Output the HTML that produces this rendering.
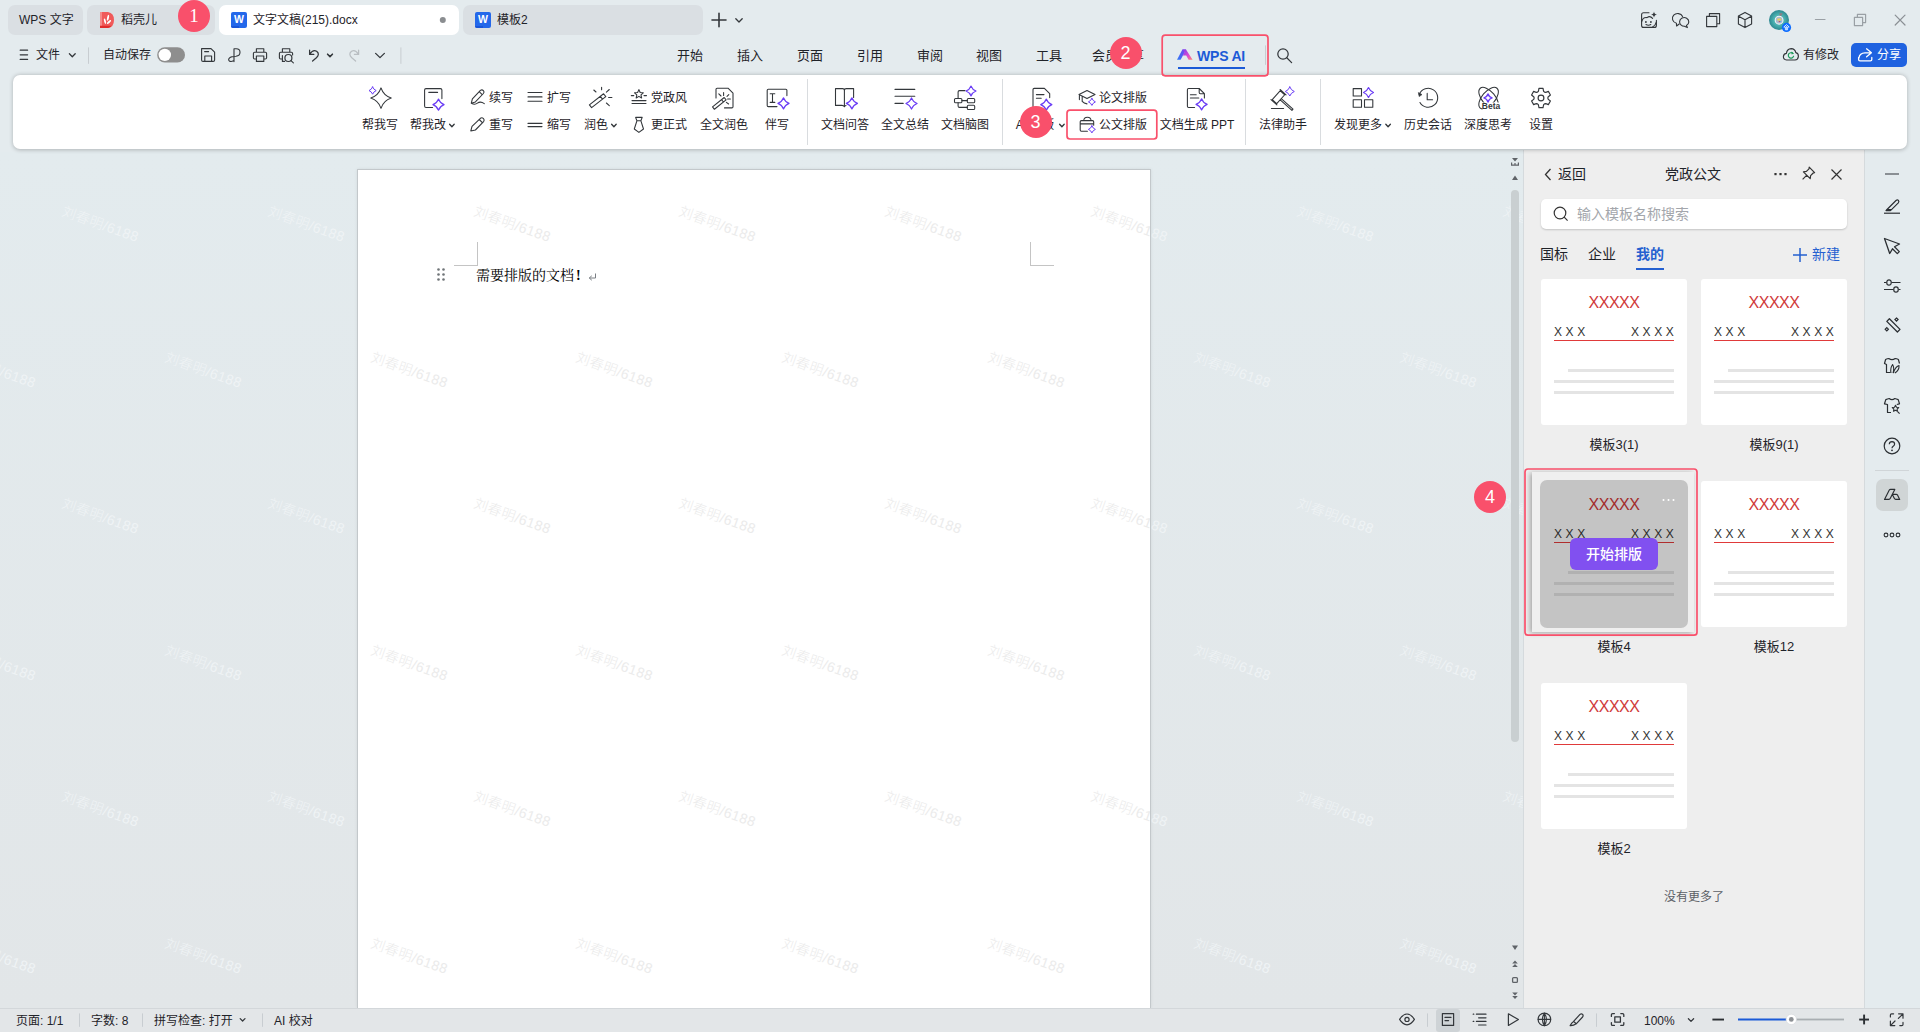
<!DOCTYPE html>
<html lang="zh-CN">
<head>
<meta charset="utf-8">
<title>WPS</title>
<style>
*{box-sizing:border-box;margin:0;padding:0}
html,body{width:1920px;height:1032px;overflow:hidden}
body{background:#e4ebee;font-family:"Liberation Sans","Noto Sans CJK SC",sans-serif;font-size:12px;color:#1f2329;position:relative}
.abs{position:absolute}
svg{position:absolute;overflow:visible}
.t{position:absolute;white-space:nowrap;line-height:1}
/* title tabs */
.tab{position:absolute;top:5px;height:30px;border-radius:7px;background:#dadfe3}
.tab.act{background:#fff}
.tab .t{top:9px;font-size:12px}
.badge{position:absolute;width:32px;height:32px;border-radius:50%;background:#f9506b;color:#fff;font-family:"Liberation Serif","Noto Serif CJK SC",serif;font-size:20px;line-height:32px;text-align:center;z-index:20}
.redbox{position:absolute;border:2px solid #f9506b;border-radius:3px;z-index:15}
/* menu */
.menu .t{top:49px;font-size:13px;color:#1f2329}
/* ribbon */
#ribbon{position:absolute;left:13px;top:75px;width:1894px;height:74px;background:#fff;border-radius:7px;box-shadow:0 0.5px 4px rgba(0,0,0,.24);z-index:4}
.rl{position:absolute;white-space:nowrap;line-height:1;font-size:12px;top:119px;color:#1f2329;transform:translateX(-50%)}
.rs{position:absolute;white-space:nowrap;line-height:1;font-size:12px;color:#1f2329}
.vsep{position:absolute;width:1px;background:#d9dcdf}
/* doc */
#page{position:absolute;left:357px;top:169px;width:794px;height:839px;background:#fff;border:1px solid #c3c8cb;border-bottom:none;box-shadow:0 0 3px rgba(0,0,0,.08)}
.wm{position:absolute;white-space:nowrap;font-size:14px;transform:rotate(19.5deg);transform-origin:left top;line-height:1;letter-spacing:0.4px;font-weight:300}
.wm.g{color:#eef2f4}
/* panel */
#panel{position:absolute;left:1523px;top:150px;width:342px;height:858px;background:#eeeeee;border-left:1px solid #d5dadd;border-right:1px solid #d5dadd}
.card{position:absolute;width:146px;height:146px;background:#fff;border-radius:3px}
.card .xx{position:absolute;left:0;width:146px;text-align:center;top:16px;font-size:16px;color:#d03a3a;line-height:1;letter-spacing:-0.5px}
.card .xl{position:absolute;left:13px;top:47px;font-size:12px;letter-spacing:3.6px;color:#333;line-height:1}
.card .xr{position:absolute;left:90px;top:47px;font-size:12px;letter-spacing:3.6px;color:#333;line-height:1}
.card .rline{position:absolute;left:13px;top:61px;width:120px;height:1px;background:#e03a3a}
.card .g1,.card .g2,.card .g3{position:absolute;height:3px;background:#e4e4e4}
.card .g1{left:27px;width:106px;top:90px}
.card .g2{left:13px;width:120px;top:101px}
.card .g3{left:13px;width:120px;top:112px}
.clab{position:absolute;width:146px;text-align:center;font-size:13px;color:#1f2329;line-height:1}
/* status */
#status{position:absolute;left:0;top:1008px;width:1920px;height:24px;background:#e3e6e8;border-top:1px solid #d3d7da}
#status .t{top:6px;font-size:12px;color:#1f2329}
</style>
</head>
<body>

<!-- ===== title tabs ===== -->
<div class="tab" style="left:8px;width:75px"><span class="t" style="left:11px">WPS 文字</span></div>
<div class="tab" style="left:87px;width:128px"><span class="t" style="left:34px">稻壳儿</span></div>
<div class="tab act" style="left:219px;width:240px"><span class="t" style="left:34px">文字文稿(215).docx</span></div>
<div class="tab" style="left:463px;width:240px"><span class="t" style="left:34px">模板2</span></div>
<div class="badge" style="left:178px;top:0px;font-size:19px">1</div>

<!-- ===== menu row ===== -->
<div class="menu">
<span class="t" style="left:36px;top:49px;font-size:12px">文件</span>
<span class="t" style="left:103px;top:49px;font-size:12px">自动保存</span>
<span class="t" style="left:677px">开始</span>
<span class="t" style="left:737px">插入</span>
<span class="t" style="left:797px">页面</span>
<span class="t" style="left:857px">引用</span>
<span class="t" style="left:917px">审阅</span>
<span class="t" style="left:976px">视图</span>
<span class="t" style="left:1036px">工具</span>
<span class="t" style="left:1092px">会员专享</span>
<span class="t" style="left:1197px;top:49px;font-size:14px;letter-spacing:-0.2px;color:#1b5ad7;font-weight:bold">WPS AI</span>
<span class="t" style="left:1803px;top:49px;font-size:12px">有修改</span>
</div>
<div class="abs" style="left:1178px;top:67px;width:67px;height:2px;background:#1b5ad7"></div>
<svg style="left:0;top:0;z-index:15;pointer-events:none" width="1920" height="1032"><rect x="1162.2" y="35.2" width="105.8" height="40.6" rx="3" fill="none" stroke="#f9506b" stroke-width="1.7"/></svg>
<div class="badge" style="left:1109.5px;top:37px;font-family:'Liberation Sans',sans-serif;font-size:18px">2</div>
<div class="abs" style="left:1851px;top:43px;width:56px;height:24px;border-radius:5px;background:#1f62e0"></div>
<span class="t" style="left:1877px;top:49px;font-size:12px;color:#fff">分享</span>

<!--TOPICONS-->
<svg style="left:0;top:0;z-index:5" width="1920" height="76" viewBox="0 0 1920 76">
<path d="M100 12 H108 Q114 13 114 20 Q114 27 108 28 H100 Z" fill="#f05a5a"/>
<path d="M100 12 H102 V28 H100 Z" fill="#f48a8a"/>
<path d="M100 25.8 H111.6 Q110.2 27.6 108 28 H100 Z" fill="#e12c2c"/>
<ellipse cx="108" cy="17.8" rx="0.95" ry="3" transform="rotate(12 108 17.8)" fill="#fff"/><ellipse cx="105" cy="21.2" rx="0.9" ry="2.8" transform="rotate(-15 105 21.2)" fill="#fff"/><ellipse cx="109" cy="22" rx="0.9" ry="2.7" transform="rotate(48 109 22)" fill="#fff"/>
<rect x="231" y="12" width="16" height="16" rx="2" fill="#2468ea"/><path d="M231 26 H239 V28 H233 Q231 28 231 26 Z" fill="#1a56d8"/><text x="239" y="23.4" text-anchor="middle" font-family="Liberation Sans,sans-serif" font-weight="bold" font-size="10.5" fill="#fff">W</text>
<rect x="475" y="12" width="16" height="16" rx="2" fill="#2468ea"/><path d="M475 26 H483 V28 H477 Q475 28 475 26 Z" fill="#1a56d8"/><text x="483" y="23.4" text-anchor="middle" font-family="Liberation Sans,sans-serif" font-weight="bold" font-size="10.5" fill="#fff">W</text>
<circle cx="442.8" cy="20" r="3" fill="#8a8d90"/>
<path d="M712 20 H726 M719 13.2 V26.8" fill="none" stroke="#33373b" stroke-width="1.6" stroke-linejoin="round" stroke-linecap="round" stroke-linecap="butt"/>
<path d="M735.8 18.8 L739 22 L742.2 18.8" fill="none" stroke="#33373b" stroke-width="1.3" stroke-linejoin="round" stroke-linecap="round" />
<path d="M1649 12.8 H1643.6 Q1641.6 12.8 1641.6 14.8 V25.4 Q1641.6 27.4 1643.6 27.4 H1654.4 Q1656.4 27.4 1656.4 25.4 V20.4" fill="none" stroke="#33373b" stroke-width="1.12" stroke-linejoin="round" stroke-linecap="round" />
<path d="M1641.8 21.4 Q1643 17 1647 17.6 Q1650 15.4 1652.6 18.4 M1646 24.6 Q1648.4 25.8 1650.8 24.6 M1652.6 27 Q1655.6 25.4 1656.2 22.4" fill="none" stroke="#33373b" stroke-width="1.1" stroke-linejoin="round" stroke-linecap="round" />
<circle cx="1645.9" cy="22" r=".9" fill="#33373b"/><circle cx="1650.9" cy="22" r=".9" fill="#33373b"/>
<path d="M1654 11.4 Q1654.3 14.2 1657.2 14.6 Q1654.3 15 1654 17.8 Q1653.7 15 1650.8 14.6 Q1653.7 14.2 1654 11.4 Z" fill="#33373b"/>
<path d="M1682.6 16.6 A5.3 4.9 0 1 0 1676.4 23.2 L1676.6 26 L1679.2 24" fill="none" stroke="#33373b" stroke-width="1.12" stroke-linejoin="round" stroke-linecap="round" />
<path d="M1679.6 21.6 A4.6 4.3 0 1 1 1686.4 25.6 L1687.4 27.6 L1684.4 26.2 A4.8 4.3 0 0 1 1679.6 21.6 Z" fill="none" stroke="#33373b" stroke-width="1.12" stroke-linejoin="round" stroke-linecap="round" />
<path d="M1706.6 16.4 H1716.8 V26.6 H1706.6 Z M1709.4 16.2 V13.6 H1719.6 V23.8 H1717" fill="none" stroke="#33373b" stroke-width="1.12" stroke-linejoin="round" stroke-linecap="round" />
<path d="M1745 12.4 L1751.6 16 V24 L1745 27.6 L1738.4 24 V16 Z M1738.6 16.2 L1745 19.8 L1751.4 16.2 M1745 19.8 V27.4" fill="none" stroke="#33373b" stroke-width="1.12" stroke-linejoin="round" stroke-linecap="round" />
<defs><radialGradient id="avg" cx="0.5" cy="0.5" r="0.5"><stop offset="0" stop-color="#5cc2c0"/><stop offset=".55" stop-color="#4ab0b0"/><stop offset="1" stop-color="#2c8790"/></radialGradient></defs>
<circle cx="1779" cy="20" r="10" fill="url(#avg)"/>
<circle cx="1779.1" cy="20.2" r="3.9" fill="#a9b9cf" stroke="#f4f4f6" stroke-width="1.1"/><rect x="1777.2" y="18.6" width="3.8" height="1.8" rx=".5" fill="#e8cf5a"/><circle cx="1779.3" cy="21.6" r=".7" fill="#c2394a"/><circle cx="1780.7" cy="21.5" r=".6" fill="#4aa3e8"/><path d="M1779.2 13.6 Q1781 12.4 1782.6 13.4 L1781.4 15.8 H1779.8 Z" fill="#8a7f86"/>
<circle cx="1786.5" cy="27.4" r="4.6" fill="#0b6cff"/><path d="M1786.5 24.6 L1789.2 27 H1787.6 V29.8 H1785.4 V27 H1783.8 Z" fill="none" stroke="#fff" stroke-width=".8" stroke-linejoin="round"/><path d="M1786.5 26 V29.6" stroke="#fff" stroke-width=".7"/>
<path d="M1815.4 19.5 H1825" fill="none" stroke="#9aa0a5" stroke-width="1.2" stroke-linejoin="round" stroke-linecap="round" />
<path d="M1854.4 17.4 H1862.6 V25.6 H1854.4 Z M1857.4 17.2 V14.4 H1865.6 V22.6 H1862.8" fill="none" stroke="#9aa0a5" stroke-width="1.2" stroke-linejoin="round" stroke-linecap="round" />
<path d="M1895.2 15.2 L1905 25 M1905 15.2 L1895.2 25" fill="none" stroke="#8a8f94" stroke-width="1.2" stroke-linejoin="round" stroke-linecap="round" />
<path d="M20.2 50.2 H27.6 M20.2 54.8 H27.6 M20.2 59.4 H27.6" fill="none" stroke="#33373b" stroke-width="1.2" stroke-linejoin="round" stroke-linecap="round" stroke-linecap="butt"/>
<path d="M69.4 53.8 L72.3 56.7 L75.2 53.8" fill="none" stroke="#33373b" stroke-width="1.3" stroke-linejoin="round" stroke-linecap="round" />
<rect x="88" y="47.4" width="1" height="16.4" fill="#c8cdd1"/>
<rect x="400.4" y="47.4" width="1" height="16.4" fill="#c8cdd1"/>
<rect x="157.2" y="47.3" width="27.8" height="15.2" rx="7.6" fill="#8e8e8e"/><circle cx="164.8" cy="54.9" r="6.2" fill="#fff"/>
<path d="M201.6 48.6 H211 L214.6 52.2 V60 Q214.6 61.4 213.2 61.4 H203 Q201.6 61.4 201.6 60 Z M204.8 61.2 V56 H211.6 V61.2 M204.6 51.6 H208.6" fill="none" stroke="#33373b" stroke-width="1.12" stroke-linejoin="round" stroke-linecap="round" />
<path d="M234 61.6 V48.8 H236.2 Q240 48.8 240 52.2 Q240 55.8 236 56.2 Q231 56.4 229.6 57.8 Q227.8 59.6 229.4 61 Q231 62.2 233.8 60.6" fill="none" stroke="#33373b" stroke-width="1.12" stroke-linejoin="round" stroke-linecap="round" />
<path d="M256.4 52 V48.8 H263.8 V52 M256.2 59 H254.6 Q253.4 59 253.4 57.8 V53.4 Q253.4 52.2 254.6 52.2 H265.4 Q266.6 52.2 266.6 53.4 V57.8 Q266.6 59 265.4 59 H264 M256.4 56 H263.8 V61.4 H256.4 Z" fill="none" stroke="#33373b" stroke-width="1.12" stroke-linejoin="round" stroke-linecap="round" />
<path d="M282.4 52 V48.8 H289.8 V52 M282.2 59 H280.6 Q279.4 59 279.4 57.8 V53.4 Q279.4 52.2 280.6 52.2 H291.4 Q292.6 52.2 292.6 53.4 V55 M282.4 55.6 V61.4 H284.6" fill="none" stroke="#33373b" stroke-width="1.12" stroke-linejoin="round" stroke-linecap="round" />
<circle cx="288.4" cy="58" r="3.5" fill="none" stroke="#33373b" stroke-width="1.2"/><path d="M291 60.6 L293.4 62.8" fill="none" stroke="#33373b" stroke-width="1.12" stroke-linejoin="round" stroke-linecap="round" />
<path d="M309.6 50.2 V54.4 H313.8 M309.8 54.2 Q313 49 316.6 51.2 Q320.2 53.8 316.4 57.8 L312.6 61" fill="none" stroke="#33373b" stroke-width="1.25" stroke-linejoin="round" stroke-linecap="round" />
<path d="M327.6 54.2 L330 56.6 L332.4 54.2" fill="none" stroke="#33373b" stroke-width="1.6" stroke-linejoin="round" stroke-linecap="round" />
<path d="M358.6 50.2 V54.4 H354.4 M358.4 54.2 Q355.2 49 351.6 51.2 Q348 53.8 351.8 57.8 L355.6 61" fill="none" stroke="#b9bec2" stroke-width="1.25" stroke-linejoin="round" stroke-linecap="round" />
<path d="M375.6 53.4 L380 57.6 L384.4 53.4" fill="none" stroke="#33373b" stroke-width="1.3" stroke-linejoin="round" stroke-linecap="round" />
<defs><linearGradient id="lg1" x1="0" y1="1" x2="1" y2="0"><stop offset="0" stop-color="#2d7cf6"/><stop offset="1" stop-color="#7a3df0"/></linearGradient><linearGradient id="lg2" x1="0" y1="0" x2="1" y2="1"><stop offset="0" stop-color="#7a3df0"/><stop offset=".6" stop-color="#e04bd0"/><stop offset="1" stop-color="#ff8a6a"/></linearGradient></defs>
<path d="M1177 59.8 L1182.4 49.4 H1186.2 L1180.6 59.8 Z" fill="url(#lg1)"/>
<path d="M1182.4 49.4 H1186 L1192.6 59.8 H1188.6 L1186.2 55.6 H1182.6 L1184.4 52.6 Z" fill="url(#lg2)"/>
<rect x="1265" y="45.4" width="1" height="19.4" fill="#c8cdd1"/>
<circle cx="1283" cy="54" r="5.2" fill="none" stroke="#33373b" stroke-width="1.25"/><path d="M1286.8 57.8 L1291.6 62.6" fill="none" stroke="#33373b" stroke-width="1.25" stroke-linejoin="round" stroke-linecap="round" />
<path d="M1786.6 60 Q1783.2 59.6 1783.4 56.4 Q1783.8 53.6 1786.4 53.4 Q1787 48.8 1791.2 48.6 Q1795 48.8 1795.8 52.6 Q1798.6 53.2 1798.4 56.6 Q1798 59.8 1795 60 Z" fill="none" stroke="#33373b" stroke-width="1.15" stroke-linejoin="round" stroke-linecap="round" />
<path d="M1792.8 53.4 A2.7 2.7 0 1 0 1793.6 56.2" fill="none" stroke="#1e9b5a" stroke-width="1.2" stroke-linejoin="round" stroke-linecap="round" /><path d="M1791.6 51.6 L1794 53.4 L1791.6 54.6 Z" fill="#1e9b5a"/>
<path d="M1866.6 48.8 L1871.4 52.8 L1866.6 56.8 M1871 52.8 H1865 Q1859.6 53 1859 57.6 M1858.6 57.4 V59.4 Q1858.6 60.8 1860 60.8 H1870.4 Q1871.8 60.8 1871.8 59.4 V57.4" fill="none" stroke="#fff" stroke-width="1.3" stroke-linejoin="round" stroke-linecap="round" />
</svg>
<!--/TOPICONS-->
<!-- ===== ribbon ===== -->
<div id="ribbon"></div>
<div id="rib" style="position:absolute;left:0;top:0;z-index:5">
<span class="rl" style="left:380px">帮我写</span>
<span class="rl" style="left:428px">帮我改</span>
<span class="rs" style="left:489px;top:92px">续写</span>
<span class="rs" style="left:489px;top:119px">重写</span>
<span class="rs" style="left:547px;top:92px">扩写</span>
<span class="rs" style="left:547px;top:119px">缩写</span>
<span class="rl" style="left:596px">润色</span>
<span class="rs" style="left:651px;top:92px">党政风</span>
<span class="rs" style="left:651px;top:119px">更正式</span>
<span class="rl" style="left:724px">全文润色</span>
<span class="rl" style="left:777px">伴写</span>
<span class="rl" style="left:845px">文档问答</span>
<span class="rl" style="left:905px">全文总结</span>
<span class="rl" style="left:965px">文档脑图</span>
<span class="rl" style="left:1035px">AI 排版</span>
<span class="rs" style="left:1099px;top:92px">论文排版</span>
<span class="rs" style="left:1099px;top:119px">公文排版</span>
<span class="rl" style="left:1197px">文档生成 PPT</span>
<span class="rl" style="left:1283px">法律助手</span>
<span class="rl" style="left:1358px">发现更多</span>
<span class="rl" style="left:1428px">历史会话</span>
<span class="rl" style="left:1488px">深度思考</span>
<span class="rl" style="left:1541px">设置</span>
<div class="vsep" style="left:807px;top:79px;height:66px"></div>
<div class="vsep" style="left:1002px;top:79px;height:66px"></div>
<div class="vsep" style="left:1245px;top:79px;height:66px"></div>
<div class="vsep" style="left:1320px;top:79px;height:66px"></div>
</div>
<!--RIBICONS-->
<svg style="left:0;top:0;z-index:5" width="1920" height="160" viewBox="0 0 1920 160">
<path d="M381.00 87.90 Q383.55 95.55 391.20 98.10 Q383.55 100.65 381.00 108.30 Q378.45 100.65 370.80 98.10 Q378.45 95.55 381.00 87.90 Z" fill="none" stroke="#33373b" stroke-width="1.08" stroke-linejoin="round" stroke-linecap="round" />
<path d="M372.60 87.00 Q373.57 89.63 376.20 90.60 Q373.57 91.57 372.60 94.20 Q371.63 91.57 369.00 90.60 Q371.63 89.63 372.60 87.00 Z" fill="none" stroke="#6a3df5" stroke-width="1" stroke-linejoin="round" stroke-linecap="round" />
<path d="M441.9 98.6 V90 Q441.9 88.6 440.4 88.6 H426 Q424.6 88.6 424.6 90 V106.1 Q424.6 107.5 426 107.5 H432.6 M428.8 92.4 H437.6" fill="none" stroke="#33373b" stroke-width="1.08" stroke-linejoin="round" stroke-linecap="round" />
<path d="M438.50 99.00 Q440.01 103.09 444.10 104.60 Q440.01 106.11 438.50 110.20 Q436.99 106.11 432.90 104.60 Q436.99 103.09 438.50 99.00 Z" fill="none" stroke="#6a3df5" stroke-width="1.12" stroke-linejoin="round" stroke-linecap="round" />
<path d="M471.3 103.2 L472.4 98.8 L480.4 90.4 Q482 89.2 483.4 90.6 Q484.7 92 483.4 93.5 L475.4 101.9 Z M479.2 91.7 L482.2 94.7 M471.3 103.3 Q475 105.2 477.4 103.2 Q480.4 100.8 484.3 103.6" fill="none" stroke="#33373b" stroke-width="1.08" stroke-linejoin="round" stroke-linecap="round" />
<path d="M470.8 131 L472 126.4 L480.4 118.3 Q482 117.2 483.5 118.6 Q484.8 120 483.6 121.6 L475.4 130 Z M479.2 119.5 L482.4 122.7" fill="none" stroke="#33373b" stroke-width="1.08" stroke-linejoin="round" stroke-linecap="round" />
<path d="M528 92.5 H542 M528 96.9 H542 M528 101.3 H542" fill="none" stroke="#33373b" stroke-width="1.08" stroke-linejoin="round" stroke-linecap="round" />
<path d="M528 123.4 H542 M528 126.6 H542" fill="none" stroke="#33373b" stroke-width="1.08" stroke-linejoin="round" stroke-linecap="round" />
<g transform="rotate(-38 597.6 100.7)"><path d="M588.6 98.9 H606.6 V102.5 H588.6 Z M602.4 98.9 V102.5" fill="none" stroke="#33373b" stroke-width="1.08" stroke-linejoin="round" stroke-linecap="round" /></g>
<path d="M601.6 87.2 V89.8 M593.8 90 L596 92 M606.4 92.2 L609.3 89.5 M608.6 97.5 H611.9 M606.4 103 L609.3 105.6" fill="none" stroke="#33373b" stroke-width="1.08" stroke-linejoin="round" stroke-linecap="round" />
<path d="M638.90 89.60 L640.19 92.42 L643.27 92.78 L640.99 94.88 L641.60 97.92 L638.90 96.40 L636.20 97.92 L636.81 94.88 L634.53 92.78 L637.61 92.42 Z" fill="none" stroke="#33373b" stroke-width="1.08" stroke-linejoin="round" stroke-linecap="round" />
<path d="M631.3 95.6 H633.8 M644 95.6 H646.5 M632 100.6 H646 M632 103.5 H646" fill="none" stroke="#33373b" stroke-width="1.08" stroke-linejoin="round" stroke-linecap="round" />
<path d="M635.6 117.4 H642.2 L640.9 120.8 H636.9 Z M636.9 120.8 L634.3 129 L638.9 132.4 L643.5 129 L640.9 120.8" fill="none" stroke="#33373b" stroke-width="1.08" stroke-linejoin="round" stroke-linecap="round" />
<path d="M716 98 V89.3 Q716 88.2 717.1 88.2 H728 L733 93.2 V106.8 Q733 107.9 731.9 107.9 H724.5" fill="none" stroke="#33373b" stroke-width="1.08" stroke-linejoin="round" stroke-linecap="round" />
<g transform="rotate(-39 719.3 103.4)"><path d="M711.8 101.9 H726.8 V104.9 H711.8 Z M723.4 101.9 V104.9" fill="none" stroke="#33373b" stroke-width="1.08" stroke-linejoin="round" stroke-linecap="round" /></g>
<path d="M723.6 92.6 V95.4 M718.8 93.8 L721 96 M727 96.4 L728.8 94.6 M727.6 99 H730.4 M726.4 102.4 L728.6 104" fill="none" stroke="#33373b" stroke-width="1.08" stroke-linejoin="round" stroke-linecap="round" />
<path d="M786.9 95.6 V90.3 Q786.9 89.2 785.8 89.2 H768.3 Q767.2 89.2 767.2 90.3 V105.5 Q767.2 106.6 768.3 106.6 H777 M770.2 93.8 H774.8 M770.2 102.4 H774.8 M772.5 93.8 V102.4" fill="none" stroke="#33373b" stroke-width="1.08" stroke-linejoin="round" stroke-linecap="round" />
<path d="M783.50 97.80 Q785.01 101.89 789.10 103.40 Q785.01 104.91 783.50 109.00 Q781.99 104.91 777.90 103.40 Q781.99 101.89 783.50 97.80 Z" fill="none" stroke="#6a3df5" stroke-width="1.12" stroke-linejoin="round" stroke-linecap="round" />
<path d="M835.5 88.6 H842.6 Q844.4 88.6 844.4 90.4 V106.8 Q843.6 105.4 842 105.4 H835.5 Z M844.4 90.4 Q844.4 88.6 846.2 88.6 H853.6 V97.4 M844.4 106.8 Q844.9 105.9 846 105.6" fill="none" stroke="#33373b" stroke-width="1.08" stroke-linejoin="round" stroke-linecap="round" />
<path d="M851.90 97.80 Q853.41 101.89 857.50 103.40 Q853.41 104.91 851.90 109.00 Q850.39 104.91 846.30 103.40 Q850.39 101.89 851.90 97.80 Z" fill="none" stroke="#6a3df5" stroke-width="1.12" stroke-linejoin="round" stroke-linecap="round" />
<path d="M895 89.4 H914.8 M895 96.3 H914.8 M895 103.4 H903.2" fill="none" stroke="#33373b" stroke-width="1.08" stroke-linejoin="round" stroke-linecap="round" />
<path d="M911.50 97.90 Q913.01 101.99 917.10 103.50 Q913.01 105.01 911.50 109.10 Q909.99 105.01 905.90 103.50 Q909.99 101.99 911.50 97.90 Z" fill="none" stroke="#6a3df5" stroke-width="1.12" stroke-linejoin="round" stroke-linecap="round" />
<path d="M955.6 98.5 H960.8 Q961.9 98.5 961.9 99.6 V101.7 Q961.9 102.8 960.8 102.8 H955.6 Q954.5 102.8 954.5 101.7 V99.6 Q954.5 98.5 955.6 98.5 Z" fill="none" stroke="#33373b" stroke-width="1.08" stroke-linejoin="round" stroke-linecap="round" />
<path d="M968.4 98.5 H973.6 Q974.7 98.5 974.7 99.6 V101.7 Q974.7 102.8 973.6 102.8 H968.4 Q967.3 102.8 967.3 101.7 V99.6 Q967.3 98.5 968.4 98.5 Z" fill="none" stroke="#33373b" stroke-width="1.08" stroke-linejoin="round" stroke-linecap="round" />
<path d="M968.4 105.3 H973.6 Q974.7 105.3 974.7 106.4 V108.4 Q974.7 109.5 973.6 109.5 H968.4 Q967.3 109.5 967.3 108.4 V106.4 Q967.3 105.3 968.4 105.3 Z" fill="none" stroke="#33373b" stroke-width="1.08" stroke-linejoin="round" stroke-linecap="round" />
<path d="M961.9 100.6 H967.3 M958.1 98.5 V92 Q958.1 90.6 959.5 90.6 H965 M958.1 102.8 V106 Q958.1 107.4 959.5 107.4 H967.3" fill="none" stroke="#33373b" stroke-width="1.08" stroke-linejoin="round" stroke-linecap="round" />
<path d="M971.00 86.00 Q972.35 89.65 976.00 91.00 Q972.35 92.35 971.00 96.00 Q969.65 92.35 966.00 91.00 Q969.65 89.65 971.00 86.00 Z" fill="none" stroke="#6a3df5" stroke-width="1.12" stroke-linejoin="round" stroke-linecap="round" />
<path d="M1033 106.4 V89.6 Q1033 88.4 1034.2 88.4 H1044.4 L1049.7 93.7 V97.6 M1036.4 94.6 H1044 M1036.4 98.2 H1041.2 M1033 106.4 Q1033 107.5 1034.2 107.5 H1040" fill="none" stroke="#33373b" stroke-width="1.08" stroke-linejoin="round" stroke-linecap="round" />
<path d="M1046.30 99.00 Q1047.81 103.09 1051.90 104.60 Q1047.81 106.11 1046.30 110.20 Q1044.79 106.11 1040.70 104.60 Q1044.79 103.09 1046.30 99.00 Z" fill="none" stroke="#6a3df5" stroke-width="1.12" stroke-linejoin="round" stroke-linecap="round" />
<path d="M1079 94.6 L1087 90.6 L1095 94.6 L1087 98.6 Z M1079.4 95 V99.6 M1082.2 96.4 V101.4 Q1084 103.6 1087 103.9" fill="none" stroke="#33373b" stroke-width="1.08" stroke-linejoin="round" stroke-linecap="round" />
<path d="M1091.90 98.40 Q1092.85 100.96 1095.40 101.90 Q1092.85 102.84 1091.90 105.40 Q1090.96 102.84 1088.40 101.90 Q1090.96 100.96 1091.90 98.40 Z" fill="none" stroke="#6a3df5" stroke-width="1" stroke-linejoin="round" stroke-linecap="round" />
<path d="M1083.8 120.6 Q1083.8 117.2 1087.4 117.2 Q1091 117.2 1091 120.6 M1093.7 125.2 V121.8 Q1093.7 120.6 1092.5 120.6 H1081.4 Q1080.2 120.6 1080.2 121.8 V130.1 Q1080.2 131.3 1081.4 131.3 H1087.4 M1080.2 123.9 H1093.7" fill="none" stroke="#33373b" stroke-width="1.08" stroke-linejoin="round" stroke-linecap="round" />
<path d="M1091.90 125.90 Q1092.85 128.46 1095.40 129.40 Q1092.85 130.34 1091.90 132.90 Q1090.96 130.34 1088.40 129.40 Q1090.96 128.46 1091.90 125.90 Z" fill="none" stroke="#6a3df5" stroke-width="1" stroke-linejoin="round" stroke-linecap="round" />
<path d="M1204.4 98 V93.7 L1199.2 88.5 H1188.6 Q1187.4 88.5 1187.4 89.7 V106.3 Q1187.4 107.5 1188.6 107.5 H1194.6 M1199.2 88.5 V92.5 Q1199.2 93.7 1200.4 93.7 H1204.4 M1190.4 94.7 H1196.2 M1190.4 98 H1198.8" fill="none" stroke="#33373b" stroke-width="1.08" stroke-linejoin="round" stroke-linecap="round" />
<path d="M1201.60 98.80 Q1203.11 102.89 1207.20 104.40 Q1203.11 105.91 1201.60 110.00 Q1200.09 105.91 1196.00 104.40 Q1200.09 102.89 1201.60 98.80 Z" fill="none" stroke="#6a3df5" stroke-width="1.12" stroke-linejoin="round" stroke-linecap="round" />
<g transform="rotate(-48 1278.5 97.2)"><path d="M1272.5 94.2 H1284.5 V100.2 H1272.5 Z M1271.7 93.2 V101.2 M1285.3 93.2 V101.2 M1277.7 100.2 V116 H1279.3 V100.2" fill="none" stroke="#33373b" stroke-width="1.08" stroke-linejoin="round" stroke-linecap="round" /></g>
<path d="M1271.4 108.5 H1283.6" fill="none" stroke="#33373b" stroke-width="1.08" stroke-linejoin="round" stroke-linecap="round" />
<path d="M1289.80 87.00 Q1291.01 90.28 1294.30 91.50 Q1291.01 92.72 1289.80 96.00 Q1288.59 92.72 1285.30 91.50 Q1288.59 90.28 1289.80 87.00 Z" fill="none" stroke="#6a3df5" stroke-width="1" stroke-linejoin="round" stroke-linecap="round" />
<path d="M1353.2 88.6 H1361.5 V96 H1353.2 Z M1353.2 99.8 H1361.5 V107.2 H1353.2 Z M1364.5 99.8 H1372.8 V107.2 H1364.5 Z" fill="none" stroke="#33373b" stroke-width="1.08" stroke-linejoin="round" stroke-linecap="round" stroke-linejoin="miter"/>
<path d="M1368.50 87.50 Q1369.85 91.15 1373.50 92.50 Q1369.85 93.85 1368.50 97.50 Q1367.15 93.85 1363.50 92.50 Q1367.15 91.15 1368.50 87.50 Z" fill="none" stroke="#6a3df5" stroke-width="1.12" stroke-linejoin="round" stroke-linecap="round" />
<path d="M1419.27 94.55 A9.5 9.5 0 1 1 1419.97 102.55 M1427.2 93.4 V99.8 H1432.6" fill="none" stroke="#33373b" stroke-width="1.08" stroke-linejoin="round" stroke-linecap="round" />
<path d="M1418.3 92.6 L1422 94.6 L1419.2 96.6 Z" fill="#33373b" stroke="#33373b" stroke-width=".6" stroke-linejoin="round"/>
<clipPath id="atomclip"><path d="M1470 80 H1510 V102.6 H1482.5 V112 H1470 Z"/></clipPath>
<g clip-path="url(#atomclip)"><ellipse cx="1488.6" cy="98.2" rx="13" ry="6.6" transform="rotate(50 1488.6 98.2)" fill="none" stroke="#33373b" stroke-width="1.05"/><ellipse cx="1488.6" cy="98.2" rx="13" ry="6.6" transform="rotate(-50 1488.6 98.2)" fill="none" stroke="#33373b" stroke-width="1.05"/></g>
<path d="M1488.00 93.90 Q1489.00 96.90 1492.00 97.90 Q1489.00 98.90 1488.00 101.90 Q1487.00 98.90 1484.00 97.90 Q1487.00 96.90 1488.00 93.90 Z" fill="none" stroke="#6a3df5" stroke-width="1.5" stroke-linejoin="round"/>
<text x="1481.8" y="108.5" font-family="Liberation Sans,sans-serif" font-size="8.2" font-weight="bold" fill="#33373b" textLength="18.4" lengthAdjust="spacingAndGlyphs">Beta</text>
<path d="M1538.94 88.32 L1543.06 88.32 Q1543.33 90.45 1543.75 91.56 L1545.20 92.40 Q1546.37 92.21 1548.36 91.38 L1548.36 91.38 L1550.42 94.94 Q1548.70 96.24 1547.95 97.16 L1547.95 98.84 Q1548.70 99.76 1550.42 101.06 L1550.42 101.06 L1548.36 104.62 Q1546.37 103.79 1545.20 103.60 L1543.75 104.44 Q1543.33 105.55 1543.06 107.68 L1543.06 107.68 L1538.94 107.68 Q1538.67 105.55 1538.25 104.44 L1536.80 103.60 Q1535.63 103.79 1533.64 104.62 L1533.64 104.62 L1531.58 101.06 Q1533.30 99.76 1534.05 98.84 L1534.05 97.16 Q1533.30 96.24 1531.58 94.94 L1531.58 94.94 L1533.64 91.38 Q1535.63 92.21 1536.80 92.40 L1538.25 91.56 Q1538.67 90.45 1538.94 88.32 Z" fill="none" stroke="#33373b" stroke-width="1.15" stroke-linejoin="round"/>
<circle cx="1541" cy="98" r="2.9" fill="none" stroke="#33373b" stroke-width="1.15"/>
<path d="M449.6 124.2 L451.90000000000003 126.8 L454.20000000000005 124.2" fill="none" stroke="#33373b" stroke-width="1.3" stroke-linejoin="round" stroke-linecap="round" />
<path d="M611.6 124.2 L613.9 126.8 L616.2 124.2" fill="none" stroke="#33373b" stroke-width="1.3" stroke-linejoin="round" stroke-linecap="round" />
<path d="M1059.6 124.2 L1061.8999999999999 126.8 L1064.1999999999998 124.2" fill="none" stroke="#33373b" stroke-width="1.3" stroke-linejoin="round" stroke-linecap="round" />
<path d="M1385.8 124.2 L1388.1 126.8 L1390.3999999999999 124.2" fill="none" stroke="#33373b" stroke-width="1.3" stroke-linejoin="round" stroke-linecap="round" />
</svg>
<!--/RIBICONS-->
<svg style="left:0;top:0;z-index:15;pointer-events:none" width="1920" height="1032"><rect x="1067" y="110.2" width="89.8" height="28.8" rx="3" fill="none" stroke="#f9506b" stroke-width="1.7"/></svg>
<div class="badge" style="left:1019.5px;top:106px;font-family:'Liberation Sans',sans-serif;font-size:18px">3</div>

<!-- ===== document ===== -->
<!--DOC-->
<div id="docarea" class="abs" style="left:0;top:152px;width:1523px;height:856px;overflow:hidden;color:#eff3f5;background:linear-gradient(to bottom,#e3ebee 0%,#e2e6e8 100%)"><span class="wm" style="left:65.0px;top:51.5px">刘春明/6188</span><span class="wm" style="left:270.8px;top:51.5px">刘春明/6188</span><span class="wm" style="left:476.6px;top:51.5px">刘春明/6188</span><span class="wm" style="left:682.4px;top:51.5px">刘春明/6188</span><span class="wm" style="left:888.2px;top:51.5px">刘春明/6188</span><span class="wm" style="left:1094.0px;top:51.5px">刘春明/6188</span><span class="wm" style="left:1299.8px;top:51.5px">刘春明/6188</span><span class="wm" style="left:1505.6px;top:51.5px">刘春明/6188</span><span class="wm" style="left:-38.0px;top:197.9px">刘春明/6188</span><span class="wm" style="left:167.8px;top:197.9px">刘春明/6188</span><span class="wm" style="left:373.6px;top:197.9px">刘春明/6188</span><span class="wm" style="left:579.4px;top:197.9px">刘春明/6188</span><span class="wm" style="left:785.2px;top:197.9px">刘春明/6188</span><span class="wm" style="left:991.0px;top:197.9px">刘春明/6188</span><span class="wm" style="left:1196.8px;top:197.9px">刘春明/6188</span><span class="wm" style="left:1402.6px;top:197.9px">刘春明/6188</span><span class="wm" style="left:65.0px;top:344.3px">刘春明/6188</span><span class="wm" style="left:270.8px;top:344.3px">刘春明/6188</span><span class="wm" style="left:476.6px;top:344.3px">刘春明/6188</span><span class="wm" style="left:682.4px;top:344.3px">刘春明/6188</span><span class="wm" style="left:888.2px;top:344.3px">刘春明/6188</span><span class="wm" style="left:1094.0px;top:344.3px">刘春明/6188</span><span class="wm" style="left:1299.8px;top:344.3px">刘春明/6188</span><span class="wm" style="left:1505.6px;top:344.3px">刘春明/6188</span><span class="wm" style="left:-38.0px;top:490.7px">刘春明/6188</span><span class="wm" style="left:167.8px;top:490.7px">刘春明/6188</span><span class="wm" style="left:373.6px;top:490.7px">刘春明/6188</span><span class="wm" style="left:579.4px;top:490.7px">刘春明/6188</span><span class="wm" style="left:785.2px;top:490.7px">刘春明/6188</span><span class="wm" style="left:991.0px;top:490.7px">刘春明/6188</span><span class="wm" style="left:1196.8px;top:490.7px">刘春明/6188</span><span class="wm" style="left:1402.6px;top:490.7px">刘春明/6188</span><span class="wm" style="left:65.0px;top:637.1px">刘春明/6188</span><span class="wm" style="left:270.8px;top:637.1px">刘春明/6188</span><span class="wm" style="left:476.6px;top:637.1px">刘春明/6188</span><span class="wm" style="left:682.4px;top:637.1px">刘春明/6188</span><span class="wm" style="left:888.2px;top:637.1px">刘春明/6188</span><span class="wm" style="left:1094.0px;top:637.1px">刘春明/6188</span><span class="wm" style="left:1299.8px;top:637.1px">刘春明/6188</span><span class="wm" style="left:1505.6px;top:637.1px">刘春明/6188</span><span class="wm" style="left:-38.0px;top:783.5px">刘春明/6188</span><span class="wm" style="left:167.8px;top:783.5px">刘春明/6188</span><span class="wm" style="left:373.6px;top:783.5px">刘春明/6188</span><span class="wm" style="left:579.4px;top:783.5px">刘春明/6188</span><span class="wm" style="left:785.2px;top:783.5px">刘春明/6188</span><span class="wm" style="left:991.0px;top:783.5px">刘春明/6188</span><span class="wm" style="left:1196.8px;top:783.5px">刘春明/6188</span><span class="wm" style="left:1402.6px;top:783.5px">刘春明/6188</span></div>
<div id="page"><div class="abs" style="left:0;top:0;width:792px;height:838px;overflow:hidden;color:#ebebeb"><span class="wm" style="left:-87.2px;top:33.5px">刘春明/6188</span><span class="wm" style="left:118.6px;top:33.5px">刘春明/6188</span><span class="wm" style="left:324.4px;top:33.5px">刘春明/6188</span><span class="wm" style="left:530.2px;top:33.5px">刘春明/6188</span><span class="wm" style="left:736.0px;top:33.5px">刘春明/6188</span><span class="wm" style="left:15.6px;top:179.9px">刘春明/6188</span><span class="wm" style="left:221.4px;top:179.9px">刘春明/6188</span><span class="wm" style="left:427.2px;top:179.9px">刘春明/6188</span><span class="wm" style="left:633.0px;top:179.9px">刘春明/6188</span><span class="wm" style="left:-87.2px;top:326.3px">刘春明/6188</span><span class="wm" style="left:118.6px;top:326.3px">刘春明/6188</span><span class="wm" style="left:324.4px;top:326.3px">刘春明/6188</span><span class="wm" style="left:530.2px;top:326.3px">刘春明/6188</span><span class="wm" style="left:736.0px;top:326.3px">刘春明/6188</span><span class="wm" style="left:15.6px;top:472.7px">刘春明/6188</span><span class="wm" style="left:221.4px;top:472.7px">刘春明/6188</span><span class="wm" style="left:427.2px;top:472.7px">刘春明/6188</span><span class="wm" style="left:633.0px;top:472.7px">刘春明/6188</span><span class="wm" style="left:-87.2px;top:619.1px">刘春明/6188</span><span class="wm" style="left:118.6px;top:619.1px">刘春明/6188</span><span class="wm" style="left:324.4px;top:619.1px">刘春明/6188</span><span class="wm" style="left:530.2px;top:619.1px">刘春明/6188</span><span class="wm" style="left:736.0px;top:619.1px">刘春明/6188</span><span class="wm" style="left:15.6px;top:765.5px">刘春明/6188</span><span class="wm" style="left:221.4px;top:765.5px">刘春明/6188</span><span class="wm" style="left:427.2px;top:765.5px">刘春明/6188</span><span class="wm" style="left:633.0px;top:765.5px">刘春明/6188</span></div></div>
<div class="abs" style="left:477px;top:242px;width:1px;height:24px;background:#c4c4c4"></div>
<div class="abs" style="left:454px;top:265px;width:24px;height:1px;background:#c4c4c4"></div>
<div class="abs" style="left:1030px;top:242px;width:1px;height:24px;background:#c4c4c4"></div>
<div class="abs" style="left:1030px;top:265px;width:24px;height:1px;background:#c4c4c4"></div>
<!--/DOC-->
<svg style="left:436px;top:267px" width="10" height="15" viewBox="0 0 10 15"><g fill="#6f7478"><circle cx="2.5" cy="2.5" r="1.3"/><circle cx="7.5" cy="2.5" r="1.3"/><circle cx="2.5" cy="7.5" r="1.3"/><circle cx="7.5" cy="7.5" r="1.3"/><circle cx="2.5" cy="12.5" r="1.3"/><circle cx="7.5" cy="12.5" r="1.3"/></g></svg>
<svg style="left:588px;top:273px" width="9" height="8" viewBox="0 0 9 8"><path d="M7.5 0.5 V5 H1.5 M3.8 2.8 L1.2 5 L3.8 7.2" fill="none" stroke="#7a7f84" stroke-width="1"/></svg>
<span class="t" style="left:476px;top:269px;font-size:14px;font-family:'Liberation Serif','Noto Serif CJK SC',serif;color:#000;z-index:2">需要排版的文档<span style="margin-left:2px;font-weight:bold">!</span></span>

<!-- ===== side panel ===== -->
<div id="panel"></div>
<!-- panel header -->
<svg style="left:1544px;top:168px" width="8" height="13" viewBox="0 0 8 13"><path d="M6.5 1 L1.5 6.5 L6.5 12" fill="none" stroke="#333" stroke-width="1.3"/></svg>
<span class="t" style="left:1558px;top:167px;font-size:14px">返回</span>
<span class="t" style="left:1665px;top:167px;font-size:14px">党政公文</span>
<svg style="left:1773.5px;top:172px" width="13" height="4" viewBox="0 0 13 4"><rect x="0.4" y="1" width="2.2" height="2.2" fill="#333"/><rect x="5.4" y="1" width="2.2" height="2.2" fill="#333"/><rect x="10.4" y="1" width="2.2" height="2.2" fill="#333"/></svg>
<svg style="left:1801px;top:166px" width="15" height="15" viewBox="0 0 15 15"><path d="M8.2 1.2 L13.6 6.6 L12.2 7 L9.6 9.6 L9.2 12.6 L2.4 5.8 L5.4 5.4 L8 2.8 Z M5.6 9.4 L1.6 13.4" fill="none" stroke="#333" stroke-width="1.2" stroke-linejoin="round"/></svg>
<svg style="left:1831px;top:169px" width="11" height="11" viewBox="0 0 11 11"><path d="M0.5 0.5 L10.5 10.5 M10.5 0.5 L0.5 10.5" stroke="#333" stroke-width="1.2"/></svg>
<!-- search -->
<div class="abs" style="left:1541px;top:199px;width:306px;height:30px;background:#fff;border-radius:5px;box-shadow:0 1px 2px rgba(0,0,0,.18)"></div>
<svg style="left:1553px;top:206px" width="16" height="16" viewBox="0 0 16 16"><circle cx="7" cy="7" r="5.8" fill="none" stroke="#333" stroke-width="1.2"/><path d="M11.2 11.2 L14.6 14.6" stroke="#333" stroke-width="1.2"/></svg>
<span class="t" style="left:1577px;top:207px;font-size:14px;color:#a3a6ab">输入模板名称搜索</span>
<!-- tabs -->
<span class="t" style="left:1540px;top:247px;font-size:14px">国标</span>
<span class="t" style="left:1588px;top:247px;font-size:14px">企业</span>
<span class="t" style="left:1636px;top:247px;font-size:14px;color:#2560d0;font-weight:bold">我的</span>
<div class="abs" style="left:1636px;top:268px;width:28px;height:2px;background:#2560d0"></div>
<svg style="left:1793px;top:247.5px" width="14" height="14" viewBox="0 0 14 14"><path d="M7 0 V14 M0 7 H14" stroke="#2560d0" stroke-width="1.5"/></svg>
<span class="t" style="left:1812px;top:247px;font-size:14px;color:#2560d0">新建</span>
<!-- cards -->
<div class="card" style="left:1541px;top:279px"><span class="xx">XXXXX</span><span class="xl">XXX</span><span class="xr">XXXX</span><div class="rline"></div><div class="g1"></div><div class="g2"></div><div class="g3"></div></div><div class="card" style="left:1701px;top:279px"><span class="xx">XXXXX</span><span class="xl">XXX</span><span class="xr">XXXX</span><div class="rline"></div><div class="g1"></div><div class="g2"></div><div class="g3"></div></div><div class="card" style="left:1541px;top:481px"><span class="xx">XXXXX</span><span class="xl">XXX</span><span class="xr">XXXX</span><div class="rline"></div><div class="g1"></div><div class="g2"></div><div class="g3"></div></div><div class="card" style="left:1701px;top:481px"><span class="xx">XXXXX</span><span class="xl">XXX</span><span class="xr">XXXX</span><div class="rline"></div><div class="g1"></div><div class="g2"></div><div class="g3"></div></div><div class="card" style="left:1541px;top:683px"><span class="xx">XXXXX</span><span class="xl">XXX</span><span class="xr">XXXX</span><div class="rline"></div><div class="g1"></div><div class="g2"></div><div class="g3"></div></div>
<span class="clab" style="left:1541px;top:438px">模板3(1)</span>
<span class="clab" style="left:1701px;top:438px">模板9(1)</span>
<span class="clab" style="left:1541px;top:640px">模板4</span>
<span class="clab" style="left:1701px;top:640px">模板12</span>
<span class="clab" style="left:1541px;top:842px">模板2</span>
<span class="t" style="left:1664px;top:891px;font-size:12px;color:#5c6066">没有更多了</span>
<!-- selected card overlay -->
<div class="abs" style="left:1532px;top:472px;width:162px;height:160px;background:#efefef;box-shadow:-2px 1px 5px rgba(0,0,0,.3);z-index:3"></div>
<div class="card" style="left:1540px;top:480px;width:148px;height:148px;border-radius:7px;background:#c4c4c4;z-index:4"><span class="xx" style="top:17px;left:1px;color:#a32c2c">XXXXX</span><span class="xl" style="left:14px;top:48px;color:#2a2a2a">XXX</span><span class="xr" style="left:91px;top:48px;color:#2a2a2a">XXXX</span><div class="rline" style="left:14px;top:62px;background:#b02e2e"></div><div class="g1" style="left:28px;top:91px;background:#b1b1b1"></div><div class="g2" style="left:14px;top:102px;background:#b1b1b1"></div><div class="g3" style="left:14px;top:113px;background:#b1b1b1"></div></div>
<div class="abs" style="left:1570px;top:538px;width:88px;height:32px;border-radius:6px;background:#8150f0;z-index:5"></div>
<span class="t" style="left:1586px;top:547px;font-size:14px;color:#fff;z-index:6;font-weight:500">开始排版</span>
<svg style="left:1662px;top:498px;z-index:6" width="13" height="4" viewBox="0 0 13 4"><circle cx="1.5" cy="2" r="1" fill="#fff"/><circle cx="6.5" cy="2" r="1" fill="#fff"/><circle cx="11.5" cy="2" r="1" fill="#fff"/></svg>
<svg style="left:0;top:0;z-index:15;pointer-events:none" width="1920" height="1032"><rect x="1525" y="469" width="172.0" height="166.2" rx="3" fill="none" stroke="#f9506b" stroke-width="1.7"/></svg>
<div class="badge" style="left:1474px;top:481px;font-family:'Liberation Sans',sans-serif;font-size:18px">4</div>


<!-- doc scrollbar -->
<div class="abs" style="left:1511px;top:190px;width:8px;height:552px;background:#c9cfd1;border-radius:4px"></div>
<svg style="left:1510px;top:155px" width="10" height="26" viewBox="0 0 10 26"><path d="M2 3 H8 L5 6.4 Z" fill="#5f6368"/><path d="M1.6 7.4 V10.2 H8.4 V7.4 M5 8 V10" fill="none" stroke="#5f6368" stroke-width="1.2"/><path d="M5 20.6 L8 25 H2 Z" fill="#5f6368"/></svg>
<svg style="left:1510px;top:943px" width="10" height="60" viewBox="0 0 10 60"><path d="M2 2.5 H8 L5 7 Z" fill="#5f6368"/><path d="M5 17.5 L7.8 20.5 H2.2 Z M5 21 L7.8 24 H2.2 Z" fill="#5f6368"/><rect x="2.6" y="34.6" width="4.8" height="4.8" rx="1" fill="none" stroke="#5f6368" stroke-width="1.3"/><path d="M2.2 49.5 H7.8 L5 52.5 Z M2.2 53 H7.8 L5 56 Z" fill="#5f6368"/></svg>
<!-- right toolbar -->
<div class="abs" style="left:1885px;top:173px;width:14px;height:2px;background:#8a8f94"></div>
<svg style="left:1883px;top:197px" width="18" height="18" viewBox="0 0 18 18"><path d="M4 12.5 L13 3.5 Q14.4 2.3 15.4 3.4 Q16.4 4.5 15.3 5.8 L8.5 12.6 Z M4 12.5 L3 13.6 H7.4 L8.5 12.6" fill="none" stroke="#2b2f33" stroke-width="1.2" stroke-linejoin="round"/><path d="M1 16.2 H17" stroke="#2b2f33" stroke-width="1.2"/></svg>
<svg style="left:1883px;top:237px" width="18" height="18" viewBox="0 0 18 18"><path d="M1.5 1.5 L16.5 7 L11.5 9.8 L16.3 14.6 L14.3 16.6 L9.5 11.8 L6.7 16.5 Z" fill="none" stroke="#2b2f33" stroke-width="1.3" stroke-linejoin="round"/></svg>
<svg style="left:1884px;top:278px" width="17" height="16" viewBox="0 0 17 16"><path d="M0 4.5 H2.5 M7.5 4.5 H16.5 M0 11.5 H9.5 M14.5 11.5 H16.5" stroke="#2b2f33" stroke-width="1.2"/><rect x="2.8" y="1.8" width="4.4" height="5.4" rx="2.2" fill="none" stroke="#2b2f33" stroke-width="1.2"/><rect x="9.8" y="8.8" width="4.4" height="5.4" rx="2.2" fill="none" stroke="#2b2f33" stroke-width="1.2"/></svg>
<svg style="left:1884px;top:317px" width="17" height="17" viewBox="0 0 17 17"><path d="M4.2 2.2 L14.8 12.8 L12.2 15.4 L1.6 4.8 Z" fill="none" stroke="#2b2f33" stroke-width="1.3" stroke-linejoin="round" transform="translate(1.2,-0.4)"/><path d="M12.5 1 l1.6 1.6 l-1.6 1.6 l-1.6 -1.6 Z M2.8 10.6 l1.6 1.6 l-1.6 1.6 l-1.6 -1.6 Z" fill="none" stroke="#2b2f33" stroke-width="1.2"/></svg>
<svg style="left:1883px;top:357px" width="18" height="18" viewBox="0 0 18 18"><path d="M7.5 15.5 H3.5 V7.5 L1.5 6.5 L2.6 2.5 Q4.4 1.6 5.8 1.5 Q9 3.8 12.2 1.5 Q13.6 1.6 15.4 2.5 L16.5 6.5" fill="none" stroke="#2b2f33" stroke-width="1.2" stroke-linejoin="round"/><path d="M8 16 Q7 11 9.6 7.5 Q11.6 11 10 16 M10.5 16 Q12 10 16 8.5 Q16.5 13 12 16" fill="none" stroke="#2b2f33" stroke-width="1.1" stroke-linejoin="round"/></svg>
<svg style="left:1883px;top:397px" width="18" height="18" viewBox="0 0 18 18"><path d="M8 15.5 H4.5 V7.5 L1.5 6.8 L2.8 2.6 Q4.6 1.8 6.2 1.5 Q9 3.8 11.8 1.5 Q13.4 1.8 15.2 2.6 L16.5 6.8 L13.8 7.5" fill="none" stroke="#2b2f33" stroke-width="1.2" stroke-linejoin="round"/><path d="M12.5 8.2 l1 2 l2.2 .3 l-1.6 1.6 l.4 2.2 l-2 -1 l-2 1 l.4 -2.2 l-1.6 -1.6 l2.2 -.3 Z" fill="none" stroke="#2b2f33" stroke-width="1.1" stroke-linejoin="round"/><path d="M14.6 14.6 L16.6 16.6" stroke="#2b2f33" stroke-width="1.2"/></svg>
<svg style="left:1883px;top:437px" width="18" height="18" viewBox="0 0 18 18"><circle cx="9" cy="9" r="7.8" fill="none" stroke="#2b2f33" stroke-width="1.2"/><path d="M6.3 7.2 Q6.4 4.6 9 4.6 Q11.6 4.7 11.6 7 Q11.6 8.4 10.2 9.2 Q9 9.9 9 11.2" fill="none" stroke="#2b2f33" stroke-width="1.2"/><circle cx="9" cy="13.3" r=".9" fill="#2b2f33"/></svg>
<div class="abs" style="left:1875px;top:470px;width:34px;height:1px;background:#d0d5d8"></div>
<div class="abs" style="left:1876px;top:479px;width:32px;height:32px;border-radius:7px;background:#d0d5d6"></div>
<svg style="left:0;top:0" width="1920" height="1032"><path d="M1884.5 499.4 L1889.3 490 Q1889.7 489.4 1890.5 489.4 H1894.8 L1890.2 498.6 Q1889.8 499.4 1889 499.4 Z M1892.3 494.3 H1896.3 Q1897.1 494.3 1897.5 495.1 L1899.7 499.4 H1895.6 Q1894.8 499.4 1894.4 498.6 L1892.6 495 Z" fill="none" stroke="#2b2f33" stroke-width="1.15" stroke-linejoin="round"/></svg>
<svg style="left:1883px;top:531px" width="18" height="8" viewBox="0 0 18 8"><circle cx="3" cy="4" r="1.9" fill="none" stroke="#2b2f33" stroke-width="1.1"/><circle cx="9" cy="4" r="1.9" fill="none" stroke="#2b2f33" stroke-width="1.1"/><circle cx="15" cy="4" r="1.9" fill="none" stroke="#2b2f33" stroke-width="1.1"/></svg>

<!-- ===== status bar ===== -->
<div id="status">
<span class="t" style="left:16px">页面: 1/1</span>
<span class="t" style="left:91px">字数: 8</span>
<span class="t" style="left:154px">拼写检查: 打开</span>
<span class="t" style="left:274px">AI 校对</span>
<span class="t" style="left:1644px">100%</span>
</div>

<!--STICONS-->
<svg style="left:0;top:1000px;z-index:5" width="1920" height="32" viewBox="0 1000 1920 32">
<rect x="79" y="1013.4" width="1" height="13.4" fill="#c8cdd1"/>
<rect x="142" y="1013.4" width="1" height="13.4" fill="#c8cdd1"/>
<rect x="262" y="1013.4" width="1" height="13.4" fill="#c8cdd1"/>
<rect x="1427" y="1013.4" width="1" height="13.4" fill="#c8cdd1"/>
<rect x="1596" y="1013.4" width="1" height="13.4" fill="#c8cdd1"/>
<path d="M240.2 1018.6 L242.6 1021 L245 1018.6" fill="none" stroke="#33373b" stroke-width="1.3" stroke-linejoin="round" stroke-linecap="round" />
<path d="M1399.6 1019.4 Q1403 1014 1407 1014 Q1411 1014 1414.4 1019.4 Q1411 1024.8 1407 1024.8 Q1403 1024.8 1399.6 1019.4 Z" fill="none" stroke="#33373b" stroke-width="1.2" stroke-linejoin="round" stroke-linecap="round" />
<circle cx="1407" cy="1019.4" r="2.1" fill="none" stroke="#33373b" stroke-width="1.2"/>
<rect x="1436" y="1009" width="24" height="23" rx="3" fill="#ced3d6"/>
<path d="M1442.4 1013.6 H1453.6 V1025.4 H1442.4 Z M1445 1017.4 H1451 M1445 1020.6 H1448.6" fill="none" stroke="#33373b" stroke-width="1.2" stroke-linejoin="round" stroke-linecap="round" />
<path d="M1476.4 1014.2 H1486 M1478.6 1017.8 H1486 M1476.4 1021.4 H1486 M1478.6 1025 H1486 M1473.2 1014.2 H1473.8 M1473.2 1021.4 H1473.8" fill="none" stroke="#33373b" stroke-width="1.2" stroke-linejoin="round" stroke-linecap="round" />
<path d="M1508.4 1013.8 L1518.4 1019.6 L1508.4 1025.4 Z" fill="none" stroke="#33373b" stroke-width="1.2" stroke-linejoin="round" stroke-linecap="round" />
<circle cx="1544.4" cy="1019.4" r="6.3" fill="none" stroke="#33373b" stroke-width="1.2"/><path d="M1538.2 1019.4 H1550.6 M1544.4 1013.2 V1025.6 M1544.4 1013.2 Q1540.4 1019.4 1544.4 1025.6 M1544.4 1013.2 Q1548.4 1019.4 1544.4 1025.6" fill="none" stroke="#33373b" stroke-width="1.1" stroke-linejoin="round" stroke-linecap="round" />
<path d="M1573.6 1021.4 L1580 1014.4 Q1581.4 1013.2 1582.6 1014.4 Q1583.6 1015.6 1582.6 1017 L1576.2 1023.8 Z M1573.6 1021.4 Q1571.6 1022.6 1570.2 1025.6 Q1573.4 1025.8 1576.2 1023.8" fill="none" stroke="#33373b" stroke-width="1.2" stroke-linejoin="round" stroke-linecap="round" />
<path d="M1611.4 1016.4 V1014.8 Q1611.4 1013.6 1612.6 1013.6 H1614.4 M1620.8 1013.6 H1622.6 Q1623.8 1013.6 1623.8 1014.8 V1016.4 M1623.8 1022.6 V1024.2 Q1623.8 1025.4 1622.6 1025.4 H1620.8 M1614.4 1025.4 H1612.6 Q1611.4 1025.4 1611.4 1024.2 V1022.6" fill="none" stroke="#33373b" stroke-width="1.3" stroke-linejoin="round" stroke-linecap="round" />
<path d="M1614.8 1016.8 H1620.4 V1022.2 H1614.8 Z" fill="none" stroke="#33373b" stroke-width="1.3" stroke-linejoin="round" stroke-linecap="round" />
<path d="M1688.4 1018.8 L1691 1021.4 L1693.6 1018.8" fill="none" stroke="#33373b" stroke-width="1.3" stroke-linejoin="round" stroke-linecap="round" />
<rect x="1712.4" y="1018.6" width="11.6" height="1.9" fill="#2b2f33"/>
<rect x="1738" y="1018.5" width="50" height="2" fill="#1b5ad7"/><rect x="1788" y="1018.6" width="56" height="1.8" fill="#a9aeb2"/>
<circle cx="1791.3" cy="1019.4" r="5.2" fill="#fff" stroke="#d5d8db" stroke-width=".6"/><circle cx="1791.3" cy="1019.4" r="2.4" fill="#8c9094"/>
<rect x="1859.2" y="1018.6" width="9.8" height="1.9" fill="#2b2f33"/><rect x="1863.15" y="1014.6" width="1.9" height="9.8" fill="#2b2f33"/>
<path d="M1890.4 1017 V1015 Q1890.4 1013.8 1891.6 1013.8 H1893.6 M1903 1022.4 V1024.4 Q1903 1025.6 1901.8 1025.6 H1899.8 M1898.6 1013.8 H1903 V1018.2 M1903 1013.8 L1898.4 1018.4 M1894.8 1025.6 H1890.4 V1021.2 M1890.4 1025.6 L1895 1021" fill="none" stroke="#33373b" stroke-width="1.2" stroke-linejoin="round" stroke-linecap="round" />
</svg>
<!--/STICONS-->
</body>
</html>
